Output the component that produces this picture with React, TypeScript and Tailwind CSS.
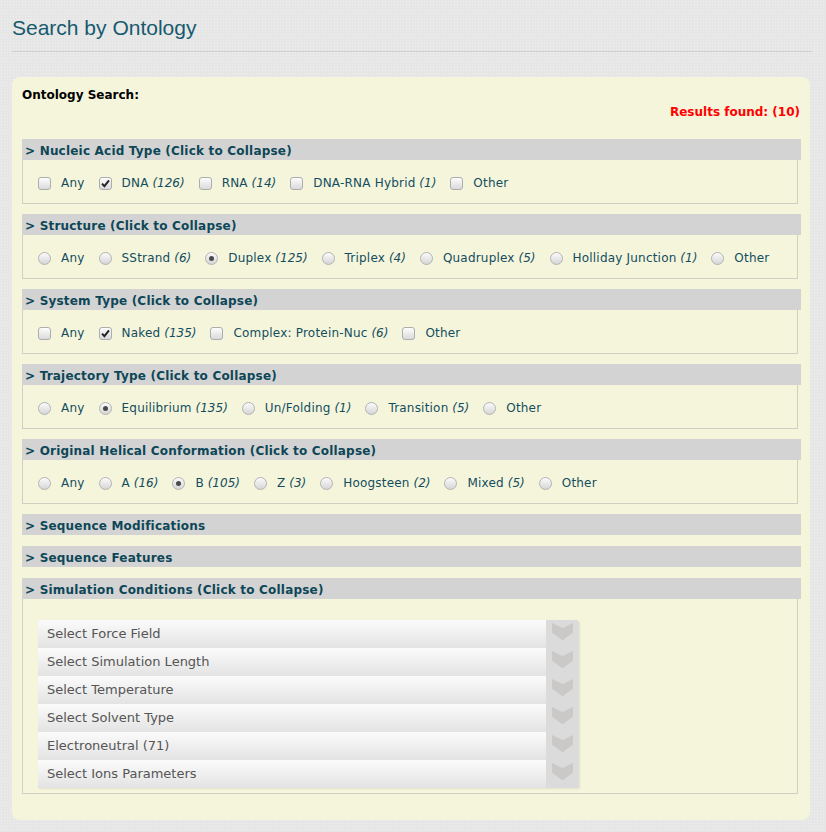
import React from "react";

// Ontology search panel: collapsible facet groups + simulation selects.
type Opt = { label: string; count?: number; checked?: boolean };
type Group = { title: string; kind: "checkbox" | "radio"; options: Opt[] };

const groups: Group[] = [
  {
    title: "Nucleic Acid Type",
    kind: "checkbox",
    options: [
      { label: "Any" },
      { label: "DNA", count: 126, checked: true },
      { label: "RNA", count: 14 },
      { label: "DNA-RNA Hybrid", count: 1 },
      { label: "Other" },
    ],
  },
  {
    title: "Structure",
    kind: "radio",
    options: [
      { label: "Any" },
      { label: "SStrand", count: 6 },
      { label: "Duplex", count: 125, checked: true },
      { label: "Triplex", count: 4 },
      { label: "Quadruplex", count: 5 },
      { label: "Holliday Junction", count: 1 },
      { label: "Other" },
    ],
  },
  {
    title: "System Type",
    kind: "checkbox",
    options: [
      { label: "Any" },
      { label: "Naked", count: 135, checked: true },
      { label: "Complex: Protein-Nuc", count: 6 },
      { label: "Other" },
    ],
  },
  {
    title: "Trajectory Type",
    kind: "radio",
    options: [
      { label: "Any" },
      { label: "Equilibrium", count: 135, checked: true },
      { label: "Un/Folding", count: 1 },
      { label: "Transition", count: 5 },
      { label: "Other" },
    ],
  },
  {
    title: "Original Helical Conformation",
    kind: "radio",
    options: [
      { label: "Any" },
      { label: "A", count: 16 },
      { label: "B", count: 105, checked: true },
      { label: "Z", count: 3 },
      { label: "Hoogsteen", count: 2 },
      { label: "Mixed", count: 5 },
      { label: "Other" },
    ],
  },
];

const selects = [
  "Select Force Field",
  "Select Simulation Length",
  "Select Temperature",
  "Select Solvent Type",
  "Electroneutral (71)",
  "Select Ions Parameters",
];

function CheckBox({ checked }: { checked?: boolean }) {
  return (
    <span className="relative flex h-[13px] w-[13px] shrink-0 items-center justify-center rounded-[3px] border border-[#adadad] bg-gradient-to-b from-[#fdfdfd] to-[#dadada]">
      {checked && (
        <svg width="9" height="9" viewBox="0 0 9 9">
          <path d="M1 4.6 L3.4 7.2 L8 1.4" fill="none" stroke="#262626" strokeWidth="2" />
        </svg>
      )}
    </span>
  );
}

function Radio({ checked }: { checked?: boolean }) {
  return (
    <span className="flex h-[13px] w-[13px] shrink-0 items-center justify-center rounded-full border border-[#b3b3b3] bg-gradient-to-b from-[#fbfbfb] to-[#d6d6d6]">
      {checked && <span className="h-[5px] w-[5px] rounded-full bg-[#4a4a4a]" />}
    </span>
  );
}

function Header({ text }: { text: string }) {
  return (
    <div className="h-[21px] w-[779px] overflow-hidden bg-[#d3d3d3] pl-[3px] text-[12px] font-bold leading-[24px] tracking-[0.2px] whitespace-nowrap text-[#0d4757]">
      {text}
    </div>
  );
}

function Chevron() {
  return (
    <svg width="21" height="18" viewBox="0 0 21 18" className="mt-[3px]">
      <polygon points="0,0 10.5,5 21,0 21,9.5 10.5,17.5 0,9.5" fill="#cbc8c8" />
    </svg>
  );
}

export default function App() {
  return (
    <div
      className="min-h-[832px] bg-[#e6e6e6] bg-[radial-gradient(#f0f0f0_0.8px,transparent_0.8px)] bg-[length:3px_3px] pb-[12px]"
      style={{ fontFamily: '"DejaVu Sans", Verdana, sans-serif' }}
    >
      <div className="mr-[14px] ml-[12px] border-b border-[#cfcfcf] pt-[16px] pb-[11px]">
        <h1
          className="text-[21px] leading-[24px] text-[#175a6e]"
          style={{ fontFamily: '"Liberation Sans", Arial, sans-serif' }}
        >
          Search by Ontology
        </h1>
      </div>

      <div className="mt-[25px] mr-[16px] ml-[12px] rounded-[8px] bg-[#f5f5dc] pt-[11px] pr-[9px] pb-[26px] pl-[10px]">
        <div className="text-[12px] font-bold leading-[14px] text-black">Ontology Search:</div>
        <div className="mt-[3px] pr-[1px] text-right text-[12px] font-bold leading-[14px] text-[#f00]">
          Results found: (10)
        </div>

        <div className="mt-[20px]">
          {groups.map((g) => (
            <div key={g.title} className="mb-[10px]">
              <Header text={`> ${g.title} (Click to Collapse)`} />
              <div className="flex h-[44px] w-[776px] items-center border-x border-b border-[#cfcfc4] pt-[3px] pl-[15px]">
                {g.options.map((o) => (
                  <div key={o.label} className="mr-[14px] flex items-center">
                    {g.kind === "checkbox" ? <CheckBox checked={o.checked} /> : <Radio checked={o.checked} />}
                    <span className="ml-[10px] text-[12px] leading-[16px] whitespace-nowrap text-[#134d5e]">
                      <span className="tracking-[0.2px]">{o.label}</span>
                      {o.count !== undefined && <i> ({o.count})</i>}
                    </span>
                  </div>
                ))}
              </div>
            </div>
          ))}

          <div className="mb-[11px]">
            <Header text="> Sequence Modifications" />
          </div>
          <div className="mb-[11px]">
            <Header text="> Sequence Features" />
          </div>

          <Header text="> Simulation Conditions (Click to Collapse)" />
          <div className="w-[776px] border-x border-b border-[#cfcfc4] pt-[21px] pb-[5px] pl-[15px]">
            <div className="w-[541px] overflow-hidden rounded-t-[3px] shadow-[1px_1px_2px_rgba(0,0,0,0.08)]">
              {selects.map((s) => (
                <div key={s} className="flex h-[28px]">
                  <div className="flex flex-1 items-center bg-gradient-to-b from-[#fbfbfb] to-[#e3e3e3] pl-[9px] text-[13px] text-[#555]">
                    {s}
                  </div>
                  <div className="flex w-[33px] justify-center bg-[#dcdbdb]">
                    <Chevron />
                  </div>
                </div>
              ))}
            </div>
          </div>
        </div>
      </div>
    </div>
  );
}
